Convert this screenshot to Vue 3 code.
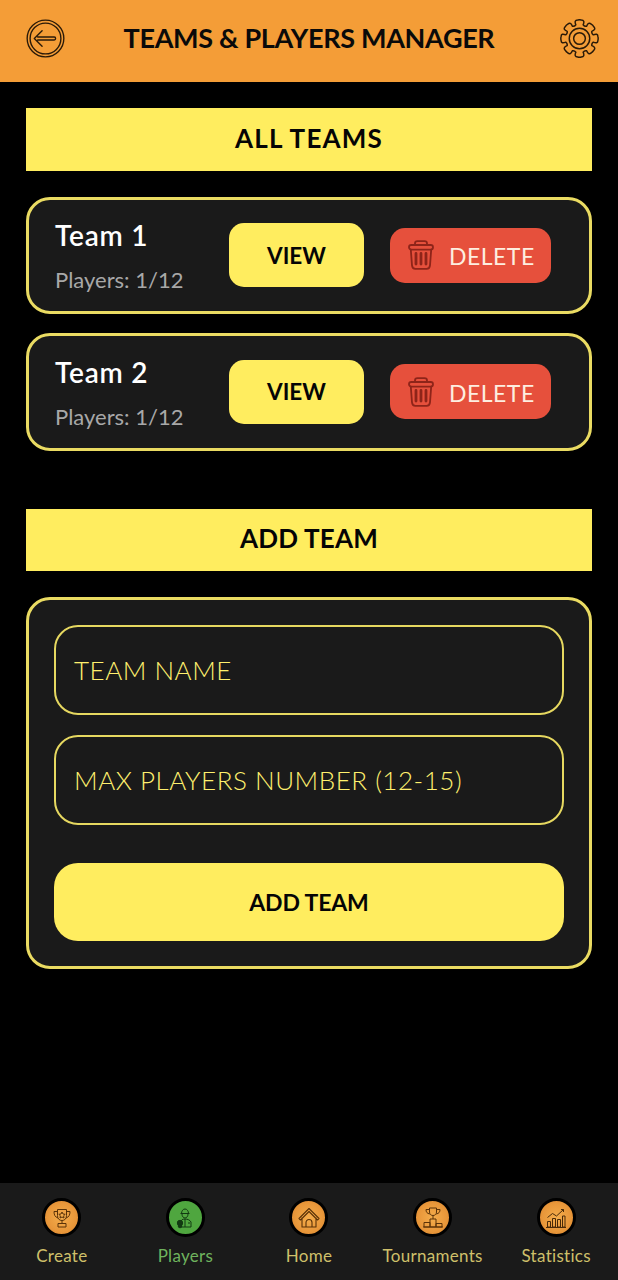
<script setup>
const teams = [
  { name: 'Team 1', players: 'Players: 1/12' },
  { name: 'Team 2', players: 'Players: 1/12' }
]
const navItems = [
  { label: 'Create', icon: 'create' },
  { label: 'Players', icon: 'players', active: true },
  { label: 'Home', icon: 'home' },
  { label: 'Tournaments', icon: 'tournaments' },
  { label: 'Statistics', icon: 'statistics' }
]

function gearPath() {
  const pt = (r, a) => `${(20 + r * Math.cos(a)).toFixed(2)} ${(20 + r * Math.sin(a)).toFixed(2)}`
  const n = 8
  const step = (Math.PI * 2) / n
  let d = ''
  for (let i = 0; i < n; i++) {
    const c = i * step - Math.PI / 2
    const root = 14.6
    const tip = 19
    d += `${i === 0 ? 'M' : 'L'}${pt(root, c - 0.26)} `
    d += `Q${pt(tip + 0.6, c - 0.3)} ${pt(tip, c - 0.1)} `
    d += `Q${pt(tip + 0.4, c)} ${pt(tip, c + 0.1)} `
    d += `Q${pt(tip + 0.6, c + 0.3)} ${pt(root, c + 0.26)} `
    d += `Q${pt(root - 1.4, c + step / 2)} ${pt(root, c + step - 0.26)} `
  }
  return d + 'Z'
}
const gear = gearPath()
</script>

<template>
  <div class="page">
    <header class="top">
      <svg class="top-icon back" viewBox="0 0 40 40" fill="none" stroke="#2a1a08" stroke-width="1.4">
        <circle cx="20" cy="20" r="18.8" />
        <circle cx="20" cy="20" r="15.8" />
        <path d="M16.500 12L8.500 20l8 8M12 18.500h17c1.800 0 1.800 3 0 3H12" stroke-linecap="round" stroke-linejoin="round" />
      </svg>
      <h1>TEAMS &amp; PLAYERS MANAGER</h1>
      <svg class="top-icon gear" viewBox="0 0 40 40" fill="none" stroke="#2a1a08" stroke-width="1.5" stroke-linejoin="round">
        <path :d="gear" />
        <circle cx="20" cy="20" r="10.500" />
        <circle cx="20" cy="20" r="6" />
      </svg>
    </header>

    <main class="content">
      <h2 class="bar all-bar">ALL TEAMS</h2>
      <ul class="teams">
        <li v-for="team in teams" :key="team.name" class="card team">
          <div class="info">
            <div class="name">{{ team.name }}</div>
            <div class="players">{{ team.players }}</div>
          </div>
          <button class="view">VIEW</button>
          <button class="delete">
            <svg class="trash" viewBox="0 0 26 30" fill="none" stroke="#8e2419" stroke-width="1.800" stroke-linejoin="round" stroke-linecap="round">
              <path d="M7 5V3.500C7 2 8 1.200 9.500 1.200h7C18 1.200 19 2 19 3.500V5" />
              <rect x="1" y="5" width="24" height="4.600" rx="2.300" />
              <path d="M2.800 9.600l1.200 15.800c.2 2.200 1.400 3.400 3.400 3.400h11.200c2 0 3.200-1.200 3.400-3.400l1.200-15.800" />
              <path d="M8 13.500v10.500M13 13.500v10.500M18 13.500v10.500" stroke-width="2.800" />
            </svg>
            <span>DELETE</span>
          </button>
        </li>
      </ul>

      <h2 class="bar add-bar">ADD TEAM</h2>
      <form class="card form" @submit.prevent>
        <div class="field">TEAM NAME</div>
        <div class="field">MAX PLAYERS NUMBER (12-15)</div>
        <button class="submit" type="submit">ADD TEAM</button>
      </form>
    </main>

    <nav class="nav">
      <div v-for="item in navItems" :key="item.label" class="nav-item" :class="{ active: item.active }">
        <span class="badge">
          <svg v-if="item.icon === 'create'" viewBox="0 0 24 24" fill="none" stroke="#5a3208" stroke-width="1">
            <path d="M7.500 3.500h9v6c0 3.200-1.800 5-4.500 5s-4.500-1.800-4.500-5zM7.500 5.500H4c0 3.500 1 5.500 4 6.500M16.500 5.500H20c0 3.500-1 5.500-4 6.500M12 14.500v3M8 17.500h8V21H8z" />
            <path d="M12 6l1 2 2.200.3-1.600 1.500.4 2.200-2-1-2 1 .4-2.200-1.600-1.500 2.200-.3z" />
          </svg>
          <svg v-else-if="item.icon === 'players'" viewBox="0 0 24 24" fill="none" stroke="#123a12" stroke-width="1">
            <path d="M8.500 7.500C8.500 5 10 3 12 3s3.500 2 3.500 4.500zM7.500 7.500h9M9 8c0 2.300 1.300 4 3 4s3-1.700 3-4" />
            <path d="M8 21v-5c0-2 1.500-3 4-3s5 1 6 3v5zM12 13v8M15 17h2" />
            <circle cx="7" cy="17" r="2.700" fill="#123a12" />
            <circle cx="7" cy="20" r="1.800" fill="#123a12" />
          </svg>
          <svg v-else-if="item.icon === 'home'" viewBox="0 0 24 24" fill="none" stroke="#5a3208" stroke-width="1.100" stroke-linejoin="round">
            <path d="M2 12.500L12 2.500l10 10-1.500 1.500L12 5.500 3.500 14zM5 11.500V21h14v-9.500M9 21v-4.500c0-1.700 1.300-3 3-3s3 1.300 3 3V21" />
          </svg>
          <svg v-else-if="item.icon === 'tournaments'" viewBox="0 0 24 24" fill="none" stroke="#5a3208" stroke-width="1">
            <path d="M8.500 2h7v4c0 2.200-1.500 3.500-3.500 3.500S8.500 8.200 8.500 6zM8.500 3.500H5c0 2.500 1 4 3.800 4.500M15.500 3.500h3.500c0 2.500-1 4-3.800 4.500M12 9.500V13" />
            <path d="M9 13h6v8H9zM3 16.500h6V21H3zM15 17.500h6V21h-6zM2 21h20" />
          </svg>
          <svg v-else viewBox="0 0 24 24" fill="none" stroke="#4a2a08" stroke-width="1">
            <path d="M3.500 11.500l5-4 4 2.500 7-6.500M17 3.500h2.500V6" />
            <path d="M3.500 21v-5.500h3V21zM8.500 21v-8.500h3V21zM13.500 21v-7.500h3V21zM18.500 21V10h2.500v11zM2 21.500h20" />
          </svg>
        </span>
        <span class="label">{{ item.label }}</span>
      </div>
    </nav>
  </div>
</template>

<style scoped>
.page {
  width: 618px;
  height: 1280px;
  background: #000;
  display: flex;
  flex-direction: column;
  font-family: Lato, "Open Sans", sans-serif;
  overflow: hidden;
}
.top {
  height: 82px;
  box-sizing: border-box;
  background: #f49d37;
  display: grid;
  grid-template-columns: 1fr auto 1fr;
  align-items: center;
  padding: 0 19px 6px;
  flex: none;
}
.top-icon {
  width: 39px;
  height: 39px;
}
.back {
  margin-left: 7px;
}
.gear {
  justify-self: end;
}
h1 {
  margin: 0;
  font-size: 27px;
  line-height: 32px;
  font-weight: 700;
  color: #0a0a0a;
  letter-spacing: -0.33px;
  white-space: nowrap;
}
.content {
  flex: 1;
  padding: 26px 26px 0;
  display: flex;
  flex-direction: column;
}
.bar {
  margin: 0;
  height: 62.5px;
  box-sizing: border-box;
  padding-bottom: 3px;
  background: #ffed5f;
  color: #050505;
  font-size: 26px;
  font-weight: 700;
  display: flex;
  align-items: center;
  justify-content: center;
  flex: none;
}
.all-bar {
  letter-spacing: 1.2px;
}
.add-bar {
  margin-top: 58px;
  letter-spacing: 0.2px;
}
.teams {
  list-style: none;
  margin: 26px 0 0;
  padding: 0;
  display: flex;
  flex-direction: column;
  gap: 19px;
}
.card {
  background: #1a1a1a;
  border: 3px solid #eadb62;
  border-radius: 24px;
  box-sizing: border-box;
}
.team {
  height: 117.5px;
  display: flex;
  align-items: center;
  padding: 0 0 0 26px;
}
.info {
  width: 174px;
  flex: none;
  padding-top: 4px;
}
.name {
  color: #fff;
  font-size: 28px;
  font-weight: 600;
  line-height: 34px;
  letter-spacing: 0.75px;
  margin-top: -2px;
}
.players {
  color: #a8a8a8;
  font-size: 22px;
  line-height: 28px;
  margin-top: 14px;
}
button {
  font-family: inherit;
  border: 0;
  cursor: pointer;
}
.view {
  width: 135px;
  height: 64px;
  border-radius: 15px;
  background: #ffed5f;
  color: #050505;
  font-size: 22.5px;
  font-weight: 700;
  flex: none;
}
.delete {
  width: 161px;
  height: 55px;
  margin-left: 26px;
  border-radius: 15px;
  background: #e6503c;
  color: #fdeee0;
  font-size: 23px;
  display: flex;
  align-items: center;
  padding: 0 0 0 18px;
  letter-spacing: 0.5px;
  flex: none;
}
.delete span {
  padding-top: 2px;
}
.trash {
  width: 26px;
  height: 30px;
  margin-right: 15px;
}
.form {
  margin-top: 26px;
  height: 372px;
  padding: 25px 25px 0;
  display: flex;
  flex-direction: column;
}
.field {
  height: 90px;
  box-sizing: border-box;
  border: 2px solid #e6d860;
  border-radius: 24px;
  color: #fff06e;
  font-size: 26px;
  font-weight: 300;
  display: flex;
  align-items: center;
  padding-left: 18px;
  margin-bottom: 20px;
  letter-spacing: 0.52px;
  flex: none;
}
.submit {
  height: 78px;
  margin-top: 18px;
  border-radius: 24px;
  background: #ffed5f;
  color: #050505;
  font-size: 23px;
  letter-spacing: -0.15px;
  font-weight: 700;
  flex: none;
}
.nav {
  height: 97px;
  background: #1a1a1a;
  display: grid;
  grid-template-columns: repeat(5, 1fr);
  flex: none;
}
.nav-item {
  display: flex;
  flex-direction: column;
  align-items: center;
  padding-top: 15px;
  color: #cfc06a;
}
.nav-item.active {
  color: #6fb35e;
}
.badge {
  width: 39px;
  height: 39px;
  box-sizing: border-box;
  border-radius: 50%;
  border: 3.500px solid #000;
  background: radial-gradient(circle, #f4ad4c 0%, #e8973a 60%, #d9822b 100%);
  display: flex;
  align-items: center;
  justify-content: center;
}
.active .badge {
  background: #4fa63f;
}
.badge svg {
  width: 24px;
  height: 24px;
}
.label {
  font-size: 17px;
  line-height: 22px;
  margin-top: 8px;
  letter-spacing: 0.3px;
}
</style>
